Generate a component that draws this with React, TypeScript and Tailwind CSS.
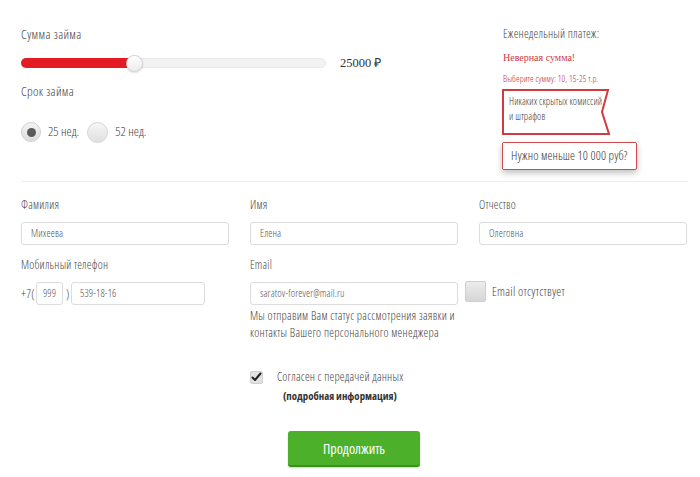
import React from "react";

const input =
  "h-[23px] border border-[#dcdcdc] rounded-[3px] flex items-center text-[10.5px] tracking-[0.1px] text-[#555]";

export default function App() {
  return (
    <div className="w-[700px] h-[477px] bg-white text-[#444] font-['Open_Sans',sans-serif] [font-stretch:75%] font-light overflow-hidden">
      {/* Top section */}
      <div className="flex pl-[21px] pt-[26px] h-[181px]">
        <div className="w-[482px]">
          <div className="text-[13px] tracking-[0.35px] leading-[16px] text-[#444]">Сумма займа</div>
          <div className="flex items-center mt-[16px] h-[10px]">
            <div className="relative w-[305px] h-[10px] rounded-full bg-[#f3f3f3] border border-[#e8e8e8]">
              <div className="absolute left-[-1px] top-[-1px] h-[10px] w-[112px] rounded-full bg-[#e51b24]" />
              <div className="absolute left-[104px] top-[-4px] w-[17px] h-[17px] rounded-full bg-gradient-to-b from-white to-[#ececec] border border-[#cfcfcf] shadow-[0_1px_2px_rgba(0,0,0,0.15)]" />
            </div>
            <span className="ml-[14px] font-['Liberation_Serif',serif] [font-stretch:100%] font-normal text-[12.5px] text-[#333]">25000 ₽</span>
          </div>
          <div className="text-[13px] tracking-[0.35px] leading-[16px] mt-[15px]">Срок займа</div>
          <div className="flex items-center mt-[23px] h-[20px] text-[13px]">
            <span className="w-[20px] h-[20px] rounded-full border border-[#cfcfcf] bg-gradient-to-b from-[#f4f4f4] to-[#dcdcdc] flex items-center justify-center">
              <span className="w-[9px] h-[9px] rounded-full bg-[#5a5a5a]" />
            </span>
            <span className="ml-[7px]">25 нед.</span>
            <span className="ml-[8px] w-[21px] h-[21px] rounded-full border border-[#d5d5d5] bg-gradient-to-b from-[#f6f6f6] to-[#e0e0e0]" />
            <span className="ml-[7px]">52 нед.</span>
          </div>
        </div>
        <div className="w-[190px]">
          <div className="text-[12px] tracking-[0.2px] leading-[16px] text-[#444]">Еженедельный платеж:</div>
          <div className="mt-[10px] font-['Liberation_Serif',serif] [font-stretch:100%] font-normal text-[10px] leading-[12px] text-[#cc3b42]">Неверная сумма!</div>
          <div className="mt-[9px] text-[9px] tracking-[0.1px] leading-[12px] text-[#c42d35]">Выберите сумму: 10, 15-25 т.р.</div>
          <div className="relative mt-[4px] ml-[-1px] w-[108px] h-[46px]">
            <svg className="absolute inset-0" width="108" height="46" viewBox="0 0 108 46">
              <polygon points="1,1 106,1 100,23 107,45 1,45" fill="white" stroke="#d23a40" strokeWidth="2" />
            </svg>
            <div className="relative pl-[7px] pt-[5px] text-[10px] tracking-[0.1px] leading-[15px] text-[#3a3a3a] whitespace-nowrap">
              Никаких скрытых комиссий
              <br />и штрафов
            </div>
          </div>
          <div className="mt-[7px] ml-[-1px] inline-flex items-center h-[28px] px-[8px] border border-[#cf4a4f] rounded-[2px] bg-white shadow-[0_3px_6px_rgba(0,0,0,0.25)] text-[12.5px] tracking-[0.12px] text-[#333] whitespace-nowrap">
            Нужно меньше 10 000 руб?
          </div>
        </div>
      </div>
      <div className="ml-[21px] mr-[12px] h-px bg-[#ececec]" />

      {/* Form */}
      <div className="px-[21px] pt-[14px]">
        <div className="grid grid-cols-[208px_208px_208px] gap-x-[21px] text-[11.8px] tracking-[0.25px]">
          <div className="leading-[16px]">Фамилия</div>
          <div className="leading-[16px]">Имя</div>
          <div className="leading-[16px]">Отчество</div>
          <div className={"mt-[10px] pl-[9px] " + input}>Михеева</div>
          <div className={"mt-[10px] pl-[9px] " + input}>Елена</div>
          <div className={"mt-[10px] pl-[9px] " + input}>Олеговна</div>
        </div>

        <div className="flex mt-[11px] text-[11.8px] tracking-[0.25px]">
          <div className="w-[229px]">
            <div className="leading-[16px]">Мобильный телефон</div>
            <div className="flex items-center mt-[10px] h-[23px]">
              <span className="w-[15px] text-[12px]">+7(</span>
              <span className={"w-[27px] justify-center " + input}>999</span>
              <span className="ml-[3px] w-[5px] text-[12px]">)</span>
              <span className={"w-[134px] pl-[8px] " + input}>539-18-16</span>
            </div>
          </div>
          <div className="w-[208px]">
            <div className="leading-[16px]">Email</div>
            <div className={"mt-[10px] pl-[9px] " + input}>saratov-forever@mail.ru</div>
            <div className="mt-[2px] leading-[17px] text-[12px] tracking-[0.25px] text-[#444] whitespace-nowrap">
              Мы отправим Вам статус рассмотрения заявки и
              <br />
              контакты Вашего персонального менеджера
            </div>
          </div>
          <div className="ml-[7px] mt-[25px] flex items-start">
            <span className="w-[21px] h-[21px] rounded-[2px] border border-[#cfcfcf] bg-gradient-to-b from-[#ececec] to-[#d6d6d6]" />
            <span className="ml-[6px] mt-[3px] text-[12.5px] tracking-[0.25px] leading-[16px] whitespace-nowrap">Email отсутствует</span>
          </div>
        </div>

        <div className="mt-[28px] pl-[229px]">
          <div className="flex items-center">
            <span className="w-[13px] h-[13px] rounded-[2px] bg-[#e2e2e2] border border-[#d0d0d0] flex items-center justify-center">
              <svg width="11" height="10" viewBox="0 0 11 10">
                <path d="M1.5 5.5 L4 8 L9.5 1.5" fill="none" stroke="#222" strokeWidth="2" strokeLinecap="round" strokeLinejoin="round" />
              </svg>
            </span>
            <span className="ml-[14px] text-[12px] tracking-[0.2px] leading-[16px]">Согласен с передачей данных</span>
          </div>
          <div className="mt-[3px] ml-[33px] font-bold text-[10.8px] leading-[16px] text-[#333]">(подробная информация)</div>
          <button className="mt-[27px] ml-[38px] w-[132px] h-[36px] rounded-[3px] bg-[#4db02b] border-b-2 border-[#3d8f20] text-white text-[14px] font-normal shadow-[0_1px_2px_rgba(0,0,0,0.2)]">
            Продолжить
          </button>
        </div>
      </div>
    </div>
  );
}
